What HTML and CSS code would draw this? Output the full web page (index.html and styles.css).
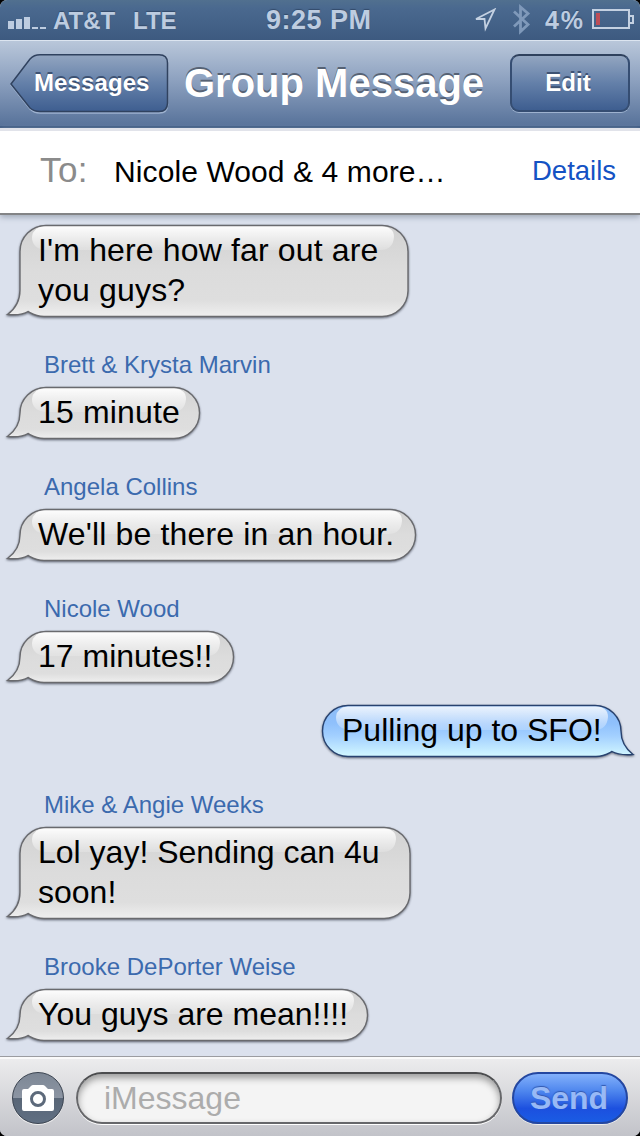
FILE: index.html
```
<!DOCTYPE html>
<html lang="en">
<head>
<meta charset="utf-8">
<title>Group Message</title>
<link rel="stylesheet" href="styles.css">
</head>
<body>
<svg class="defs" width="0" height="0">
  <defs>
    <linearGradient id="gray" x1="0" y1="0" x2="0" y2="1"><stop offset="0" stop-color="#d2d2d2"/><stop offset=".5" stop-color="#dcdcdc"/><stop offset=".82" stop-color="#dedede"/><stop offset="1" stop-color="#efefef"/></linearGradient>
    <linearGradient id="blue" x1="0" y1="0" x2="0" y2="1"><stop offset="0" stop-color="#8dbcf5"/><stop offset=".35" stop-color="#8fc0fc"/><stop offset=".6" stop-color="#a3d0ff"/><stop offset="1" stop-color="#d3f8ff"/></linearGradient>
    <linearGradient id="gloss" x1="0" y1="0" x2="0" y2="1"><stop offset="0" stop-color="#fff" stop-opacity=".95"/><stop offset="1" stop-color="#fff" stop-opacity=".18"/></linearGradient>
    <linearGradient id="glossBlue" x1="0" y1="0" x2="0" y2="1"><stop offset="0" stop-color="#fff" stop-opacity=".82"/><stop offset="1" stop-color="#fff" stop-opacity=".2"/></linearGradient>
    <linearGradient id="nav" x1="0" y1="0" x2="0" y2="1"><stop offset="0" stop-color="#92a5c0"/><stop offset=".5" stop-color="#6480a9"/><stop offset="1" stop-color="#3e5e90"/></linearGradient>
  </defs>
</svg>
<div class="phone">
  <header class="status">
    <div class="carrier">
      <svg width="40" height="16" viewBox="0 0 40 16"><path d="M0 7h6v8H0zM8 5h6v10H8zM16 3h6v12h-6zM24 13h6v2h-6zM32 13h6v2h-6z" fill="#bdcce0"/></svg>
      <span class="att">AT&amp;T</span><span class="lte">LTE</span>
    </div>
    <span class="clock">9:25 PM</span>
    <div class="indicators">
      <svg class="loc" width="24" height="24" viewBox="0 0 24 24"><path d="M21.500 1.500 3 11h8.500l1 9.500z" fill="none" stroke="#c4d1e2" stroke-width="1.800"/></svg>
      <svg class="bt" width="20" height="32" viewBox="0 0 20 32"><path d="M2 8.500l14 13-7.500 7V4l7.500 6.500-14 13" fill="none" stroke="#7f99ba" stroke-width="2.800"/></svg>
      <span class="pct">4%</span>
      <svg class="batt" width="42" height="21" viewBox="0 0 42 21"><rect x="1" y="1" width="36" height="18" fill="none" stroke="#c4d1e2" stroke-width="2"/><path d="M38 7h3v7h-3" fill="none" stroke="#c4d1e2" stroke-width="2"/><rect x="4" y="4" width="4" height="12" fill="#bd4d57"/></svg>
    </div>
  </header>

  <nav class="navbar">
    <a class="back">
      <svg width="160" height="60" viewBox="0 0 160 60"><path d="M1 31 20 6Q24 2 30 2H149Q157.500 2 157.500 10V51Q157.500 59 149 59H30Q24 59 20 55Z" fill="none" stroke="#9eb2cf" stroke-width="1.500"/><path d="M1 30 20 5Q24 .800 30 .800H149Q157.500 .800 157.500 9V49Q157.500 57.500 149 57.500H30Q24 57.500 20 54Z" fill="url(#nav)" stroke="#30425f" stroke-width="1.500"/></svg>
      <span>Messages</span>
    </a>
    <h1>Group Message</h1>
    <a class="edit">Edit</a>
  </nav>

  <section class="to">
    <span class="to-label">To:</span>
    <span class="to-names">Nicole Wood &amp; 4 more…</span>
    <a class="details">Details</a>
  </section>

  <main class="thread">
    <div class="bubble">
      <svg width="410" height="92"><path class="in" d="M46 .500H382A26 26 0 0 1 408 26.500V66A26 26 0 0 1 382 91.500H44C36 91.500 31 88 28 86.500C23 90 14 90 7.500 89.500C15 84 20 77 20 65V26.500A26 26 0 0 1 46 .500Z"/><path d="M44 1.500H382Q394 2 394 12Q393 25 380 25H46Q32 24 32 12Q33 2 44 1.500Z" fill="url(#gloss)"/></svg>
      <p class="t1">I'm here how far out are<br>you guys?</p>
    </div>
    <div class="name">Brett &amp; Krysta Marvin</div>
    <div class="bubble">
      <svg width="202" height="52"><path class="in" d="M46 .500H174A25.500 25.500 0 0 1 174 51.500H44C36 51.500 31 48 28 46.500C23 50 14 50 7.500 49.500C15 44 20 37 20 26A26 25.500 0 0 1 46 .500Z"/><path d="M44 1.500H174Q186 2 186 12Q185 25 172 25H46Q32 24 32 12Q33 2 44 1.500Z" fill="url(#gloss)"/></svg>
      <p class="t2">15 minute</p>
    </div>
    <div class="name">Angela Collins</div>
    <div class="bubble">
      <svg width="418" height="52"><path class="in" d="M46 .500H390A25.500 25.500 0 0 1 390 51.500H44C36 51.500 31 48 28 46.500C23 50 14 50 7.500 49.500C15 44 20 37 20 26A26 25.500 0 0 1 46 .500Z"/><path d="M44 1.500H390Q402 2 402 12Q401 25 388 25H46Q32 24 32 12Q33 2 44 1.500Z" fill="url(#gloss)"/></svg>
      <p class="t3">We'll be there in an hour.</p>
    </div>
    <div class="name">Nicole Wood</div>
    <div class="bubble">
      <svg width="236" height="52"><path class="in" d="M46 .500H208A25.500 25.500 0 0 1 208 51.500H44C36 51.500 31 48 28 46.500C23 50 14 50 7.500 49.500C15 44 20 37 20 26A26 25.500 0 0 1 46 .500Z"/><path d="M44 1.500H208Q220 2 220 12Q219 25 206 25H46Q32 24 32 12Q33 2 44 1.500Z" fill="url(#gloss)"/></svg>
      <p class="t4">17 minutes!!</p>
    </div>
    <div class="bubble sent">
      <svg width="320" height="52"><path class="out" d="M28 .500H275A26 25.500 0 0 1 301 26C301 37 306 44 313 49.500C306 50 298 50 292 46.500C289 48 284 51.500 276 51.500H28A25.500 25.500 0 0 1 28 .500Z"/><path d="M28 1.500H276Q288 2 288 12Q287 25 274 25H30Q16 24 16 12Q17 2 28 1.500Z" fill="url(#glossBlue)"/></svg>
      <p class="t5">Pulling up to SFO!</p>
    </div>
    <div class="name">Mike &amp; Angie Weeks</div>
    <div class="bubble">
      <svg width="412" height="92"><path class="in" d="M46 .500H384A26 26 0 0 1 410 26.500V66A26 26 0 0 1 384 91.500H44C36 91.500 31 88 28 86.500C23 90 14 90 7.500 89.500C15 84 20 77 20 65V26.500A26 26 0 0 1 46 .500Z"/><path d="M44 1.500H384Q396 2 396 12Q395 25 382 25H46Q32 24 32 12Q33 2 44 1.500Z" fill="url(#gloss)"/></svg>
      <p class="t6">Lol yay! Sending can 4u<br>soon!</p>
    </div>
    <div class="name">Brooke DePorter Weise</div>
    <div class="bubble">
      <svg width="370" height="52"><path class="in" d="M46 .500H342A25.500 25.500 0 0 1 342 51.500H44C36 51.500 31 48 28 46.500C23 50 14 50 7.500 49.500C15 44 20 37 20 26A26 25.500 0 0 1 46 .500Z"/><path d="M44 1.500H342Q354 2 354 12Q353 25 340 25H46Q32 24 32 12Q33 2 44 1.500Z" fill="url(#gloss)"/></svg>
      <p class="t7">You guys are mean!!!!</p>
    </div>
  </main>

  <footer class="composer">
    <div class="camera"><svg width="32" height="27" viewBox="0 0 32 27"><path d="M2 4H6L9 1Q10 0 11 0H21Q22 0 23 1L26 4H30Q32 4 32 6V24Q32 26 30 26H2Q0 26 0 24V6Q0 4 2 4Z" fill="#fff"/><circle cx="16" cy="14" r="6.500" fill="none" stroke="#5d6a7b" stroke-width="3"/></svg></div>
    <div class="field">iMessage</div>
    <div class="send">Send</div>
  </footer>
</div>
</body>
</html>
```
FILE: styles.css
```
body { margin: 0; background: #000; font-family: "Liberation Sans", Arial, sans-serif; }
.defs { position: absolute; }
.phone { width: 640px; height: 1136px; display: flex; flex-direction: column; overflow: hidden; border-radius: 7px; background: #dbe1ed; white-space: nowrap; }
p, h1 { margin: 0; }
svg { display: block; flex: none; }

.status { height: 40px; flex: none; display: grid; grid-template-columns: 266px 1fr 167px; background: linear-gradient(#51708f, #4a698f 20%, #3d5a80); color: #bdcce0; font-weight: bold; font-size: 24px; line-height: 41px; text-shadow: 0 -1px 1px #334b6b; }
.carrier { display: flex; padding-left: 8px; }
.carrier svg { margin-top: 14px; }
.att { margin-left: 5px; width: 80px; }
.clock { font-size: 27px; line-height: 40px; letter-spacing: .5px; }
.indicators { display: flex; }
.loc { margin: 8px 0 0 0; }
.bt { margin: 3px 0 0 15px; }
.pct { margin-left: 13px; width: 47px; font-size: 25px; letter-spacing: 1.8px; }
.batt { margin-top: 9px; }

.navbar { height: 88px; flex: none; box-sizing: border-box; display: grid; grid-template-columns: 184px 326px 120px; background: linear-gradient(#b9c7da, #8ea2c0 45%, #57729a); border-top: 1px solid #dce5f0; border-bottom: 2px solid #3c5a84; color: #fff; }
.navbar h1 { font-size: 40px; line-height: 84px; text-shadow: 0 -2px 0 #566274; }
.back { display: grid; margin: 13px 0 0 10px; width: 160px; height: 60px; }
.back svg, .back span { grid-area: 1 / 1; }
.back span { padding-left: 24px; line-height: 57px; position: relative; }
.back, .edit { font-weight: bold; font-size: 24px; text-shadow: 0 -2px 0 #3d5273; letter-spacing: .1px; }
.edit { margin-top: 13px; height: 58px; box-sizing: border-box; border: 2px solid #354d72; border-top-color: #2f415d; border-radius: 9px; background: linear-gradient(#92a5c0, #6480a9 50%, #3e5e90); text-align: center; line-height: 54px; padding-right: 4px; box-shadow: 0 1px 0 #9eb2cf; }

.to { height: 87px; flex: none; box-sizing: border-box; display: grid; grid-template-columns: 74px 418px 1fr; padding-left: 40px; background: #fff; border-top: 3px solid #e1e3ea; border-bottom: 2px solid #838486; position: relative; box-shadow: 0 2px 6px #9da6b5; }
.to-label { font-size: 35px; color: #8b8b8b; line-height: 77px; letter-spacing: .4px; }
.to-names { font-size: 30px; line-height: 82px; letter-spacing: .1px; }
.details { font-size: 27.5px; color: #1452c4; line-height: 80px; }

.thread { flex: 1; min-height: 0; display: flex; flex-direction: column; padding-top: 10px; }
.bubble { display: grid; justify-content: start; margin-bottom: 22px; }
.bubble:last-child { margin-bottom: 0; }
.bubble svg, .bubble p { grid-area: 1 / 1; }
.bubble svg { overflow: visible; filter: drop-shadow(0 1px 1px rgba(60,65,80,.7)); }
.bubble p { position: relative; padding-left: 38px; font-size: 32px; line-height: 40px; padding-top: 5px; height: 0; color: #000; }
.bubble .t1, .bubble .t3 { letter-spacing: .15px; }
.bubble .t2 { letter-spacing: .15px; }
.sent { margin-left: 320px; }
.sent p { padding-left: 22px; }
.in { fill: url(#gray); stroke: #696a6e; stroke-width: 1.4; }
.out { fill: url(#blue); stroke: #28426f; stroke-width: 1.4; }
.name { height: 48px; line-height: 52px; padding-left: 44px; font-size: 24px; color: #3b6aae; }

.composer { height: 80px; flex: none; box-sizing: border-box; display: flex; padding: 15px 0 0 12px; border-top: 1px solid #9b9ca0; box-shadow: inset 0 2px 0 #fafafa; background: linear-gradient(#ededee, #c2c3c9); }
.camera { width: 52px; height: 52px; box-sizing: border-box; border: 1.5px solid #3a4350; border-radius: 50%; background: linear-gradient(#7d8795, #8c95a3 50%, #596677 51%, #606f82); display: grid; place-items: center; box-shadow: 0 1px 0 #eee; }
.field { width: 426px; height: 52px; margin-left: 12px; box-sizing: border-box; border: 2px solid #66676a; border-top-color: #4b4c4e; border-radius: 26px; background: #f4f4f4; box-shadow: inset 0 4px 7px #9b9b9b, 0 1px 0 #fff; padding-left: 26px; font-size: 32px; line-height: 49px; color: #acacac; }
.send { width: 116px; height: 52px; margin-left: 10px; box-sizing: border-box; border: 2px solid #2447a0; border-radius: 26px; background: linear-gradient(#83b1fb, #4f87ee 35%, #1c50df 72%, #1a5ce4); text-align: center; font-weight: bold; font-size: 32px; line-height: 49px; color: #98b9f6; text-shadow: 0 -1px 1px #3159b0; box-shadow: 0 1px 0 #eee; padding-right: 2px; }
```
